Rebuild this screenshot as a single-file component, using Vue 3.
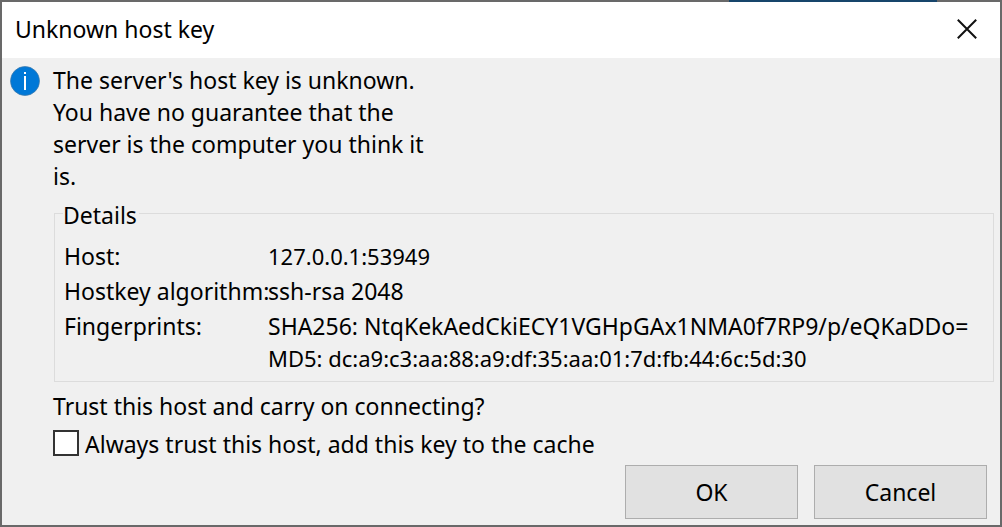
<script setup>
import { ref } from 'vue'

const trustAlways = ref(false)
</script>

<template>
  <div class="desktop">
    <main class="dialog" role="dialog" aria-labelledby="dialog-title">
      <header class="titlebar">
        <h1 id="dialog-title">Unknown host key</h1>
        <button class="close" type="button" aria-label="Close">
          <svg viewBox="0 0 20 20" width="20" height="20" aria-hidden="true">
            <path d="M0.8 0.8L19.2 19.2M19.2 0.8L0.8 19.2" fill="none" stroke="#111" stroke-width="2" />
          </svg>
        </button>
      </header>
      <form class="content" @submit.prevent>
        <svg class="info" viewBox="0 0 30 30" width="30" height="30" aria-hidden="true">
          <circle cx="15" cy="15" r="14.5" fill="#0078d7" stroke="#3f79a8" stroke-width="0.7" />
          <path d="M14 6h2v2h-2zM14 10h2v14h-2z" fill="#fff" />
        </svg>
        <div class="body">
          <p class="intro">The server's host key is unknown. You have no guarantee that the server is the computer you think it is.</p>
          <fieldset>
            <legend>Details</legend>
            <dl>
              <dt>Host:</dt>
              <dd class="numeric">127.0.0.1:53949</dd>
              <dt>Hostkey algorithm:</dt>
              <dd>ssh-rsa 2048</dd>
              <dt>Fingerprints:</dt>
              <dd>
                <div>SHA256: NtqKekAedCkiECY1VGHpGAx1NMA0f7RP9/p/eQKaDDo=</div>
                <div class="numeric">MD5: dc:a9:c3:aa:88:a9:df:35:aa:01:7d:fb:44:6c:5d:30</div>
              </dd>
            </dl>
          </fieldset>
          <p class="question">Trust this host and carry on connecting?</p>
          <label class="trust">
            <input v-model="trustAlways" type="checkbox" />
            <span>Always trust this host, add this key to the cache</span>
          </label>
          <div class="actions">
            <button type="submit">OK</button>
            <button type="button">Cancel</button>
          </div>
        </div>
      </form>
    </main>
  </div>
</template>

<style>
body {
  margin: 0;
}
</style>

<style scoped>
.desktop {
  box-sizing: border-box;
  display: flex;
  min-height: 100vh;
  padding: 2px;
  background:
    linear-gradient(#17456b, #17456b) 729px 0 / 208px 2px no-repeat,
    #696969;
}
.dialog {
  flex: 1;
  min-width: 0;
  background: #f0f0f0;
  color: #000;
  font: 23px/32px "Noto Sans", "Noto Sans CJK KR", sans-serif;
}
.titlebar {
  box-sizing: border-box;
  display: flex;
  align-items: center;
  justify-content: space-between;
  height: 56px;
  padding: 0 15px 2px 13px;
  background: #fff;
}
h1 {
  margin: 0;
  font: inherit;
}
button {
  font: inherit;
  color: inherit;
}
.close {
  display: flex;
  padding: 8px;
  border: 0;
  background: none;
}
.content {
  display: flex;
  gap: 13px;
  padding: 6px 6px 6px 8px;
}
.info {
  flex: none;
  margin-top: 2px;
}
.body {
  flex: 1;
  min-width: 0;
}
p {
  margin: 0;
}
.intro {
  max-width: 384px;
}
fieldset {
  margin: 6px 0 8px 1px;
  padding: 0 8px 7px;
  border: 1px solid #dcdcdc;
  min-width: 0;
}
legend {
  padding: 4px 2px 0 0;
  line-height: 26px;
}
dl {
  display: grid;
  grid-template-columns: 204px 1fr;
  row-gap: 3px;
  margin: 12px 0 0;
  padding-left: 1px;
}
dt,
dd {
  margin: 0;
  white-space: nowrap;
}
.numeric {
  font-size: 22px;
}
.trust {
  display: flex;
  align-items: flex-start;
  gap: 6px;
  margin-top: 6px;
  width: fit-content;
}
input {
  appearance: none;
  box-sizing: border-box;
  flex: none;
  width: 26px;
  height: 26px;
  margin: 2px 0 0;
  border: 2px solid #333;
  background: #fff;
}
input:checked {
  background: radial-gradient(#333 50%, #fff 52%);
}
.actions {
  display: flex;
  justify-content: flex-end;
  gap: 16px;
  margin-top: 5px;
  padding-right: 7px;
}
.actions button {
  width: 173px;
  height: 54px;
  padding: 0;
  border: 1px solid #adadad;
  background: #e1e1e1;
}
</style>
